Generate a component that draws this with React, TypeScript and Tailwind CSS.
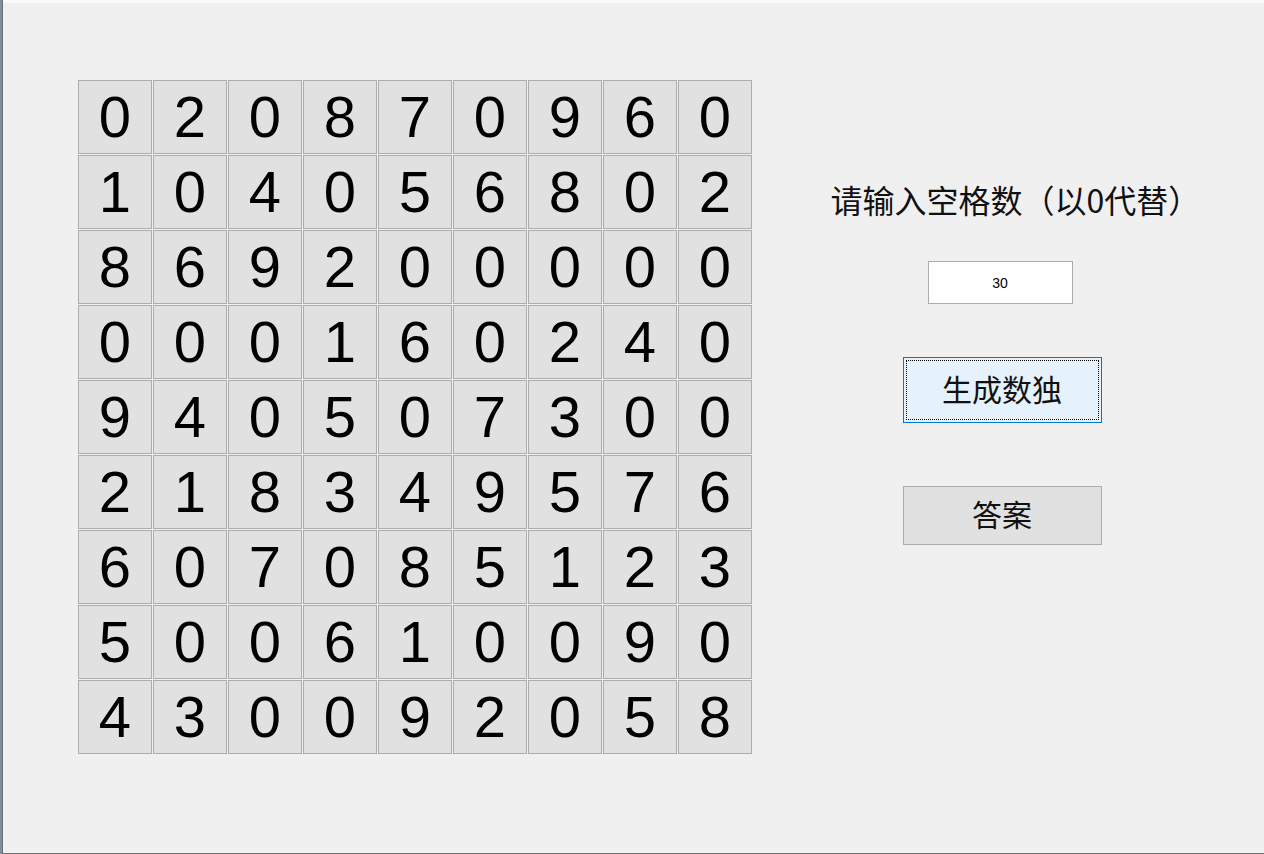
const board: number[][] = [
  [0, 2, 0, 8, 7, 0, 9, 6, 0],
  [1, 0, 4, 0, 5, 6, 8, 0, 2],
  [8, 6, 9, 2, 0, 0, 0, 0, 0],
  [0, 0, 0, 1, 6, 0, 2, 4, 0],
  [9, 4, 0, 5, 0, 7, 3, 0, 0],
  [2, 1, 8, 3, 4, 9, 5, 7, 6],
  [6, 0, 7, 0, 8, 5, 1, 2, 3],
  [5, 0, 0, 6, 1, 0, 0, 9, 0],
  [4, 3, 0, 0, 9, 2, 0, 5, 8],
];

const cjk = "font-['Noto_Sans_CJK_SC','Liberation_Sans',sans-serif]";

export default function App() {
  return (
    <div className="flex h-[854px] w-[1264px] bg-[#f0f0f0]">
      {/* desktop sliver + window edge */}
      <div className="h-full w-[2px] bg-[#7d8fa0]" />
      <div className="flex h-full flex-1 flex-col border-b border-l border-[#707070]">
        <div className="h-[3px] bg-[#fafafa]" />
        <div className="flex flex-1 items-start bg-[#f0f0f0]">
          {/* sudoku grid */}
          <div className="ml-[75px] mt-[77px] grid grid-cols-[repeat(9,74px)] grid-rows-[repeat(9,74px)] gap-px">
            {board.flat().map((n, i) => (
              <div
                key={i}
                className="flex items-center justify-center border border-[#adadad] bg-[#e1e1e1] font-['Liberation_Sans',Arial,sans-serif] text-[58px] leading-none text-black"
              >
                {n}
              </div>
            ))}
          </div>

          {/* controls */}
          <div className="ml-[50px] flex w-[400px] flex-col items-center">
            <div className={`mt-[178px] pl-[27px] text-[32px] leading-[36px] text-[#111] ${cjk}`}>
              请输入空格数（以0代替）
            </div>
            <input
              readOnly
              value="30"
              className="mr-[4px] mt-[44px] h-[43px] w-[145px] border border-[#acacac] bg-white text-center font-['Liberation_Sans',Arial,sans-serif] text-[14px] text-black outline-none"
            />
            <button className="mt-[53px] flex h-[66px] w-[199px] items-center justify-center border border-[#0078d7] bg-[#e5f1fb] p-[2px]">
              <span className={`flex h-full w-full items-center justify-center border border-dotted border-black pb-[4px] text-[30px] text-[#111] ${cjk}`}>
                生成数独
              </span>
            </button>
            <button className={`mt-[63px] flex h-[59px] w-[199px] items-center justify-center border border-[#adadad] bg-[#e1e1e1] pb-[4px] text-[30px] text-[#111] ${cjk}`}>
              答案
            </button>
          </div>
        </div>
      </div>
    </div>
  );
}
